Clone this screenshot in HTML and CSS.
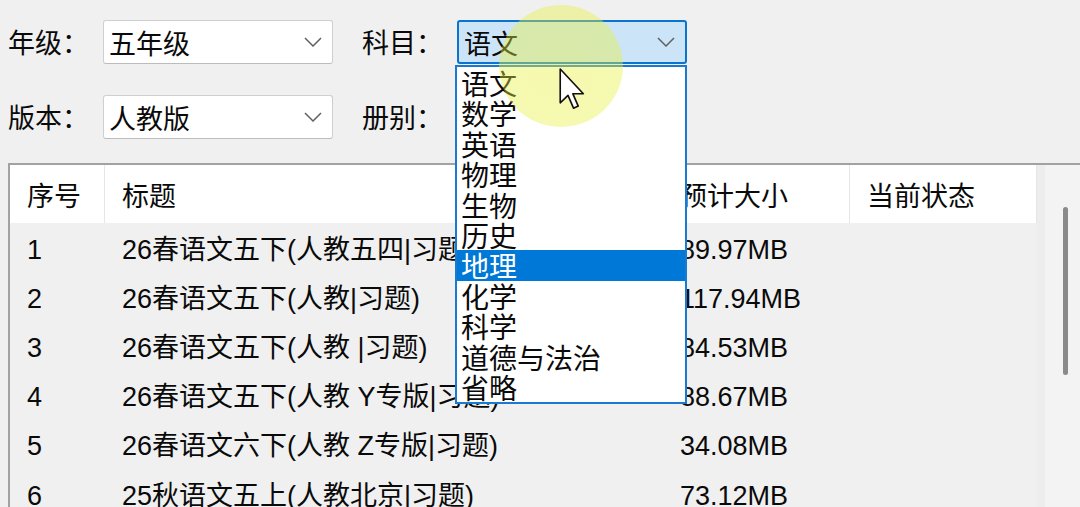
FILE: index.html
```html
<!DOCTYPE html>
<html lang="zh-CN">
<head>
    <meta charset="UTF-8">
    <title>下载器</title>
    <link rel="stylesheet" href="styles.css">
</head>
<body>
    <div class="form">
        <div class="field-label">年级：</div>
        <div class="combo">
            <span>五年级</span>
            <svg class="chevron" viewBox="0 0 18 10"><path d="M1 1 L9 9 L17 1"/></svg>
        </div>
        <div class="field-label second">科目：</div>
        <div class="combo focus">
            <span>语文</span>
            <svg class="chevron" viewBox="0 0 18 10"><path d="M1 1 L9 9 L17 1"/></svg>
        </div>
        <div class="field-label">版本：</div>
        <div class="combo">
            <span>人教版</span>
            <svg class="chevron" viewBox="0 0 18 10"><path d="M1 1 L9 9 L17 1"/></svg>
        </div>
        <div class="field-label second">册别：</div>
        <div class="combo">
            <span></span>
            <svg class="chevron" viewBox="0 0 18 10"><path d="M1 1 L9 9 L17 1"/></svg>
        </div>
    </div>

    <div class="list">
        <div class="list-table">
            <div class="head">序号</div>
            <div class="head">标题</div>
            <div class="head">预计大小</div>
            <div class="head">当前状态</div>

            <div class="cell">1</div><div class="cell">26春语文五下(人教五四|习题)</div><div class="cell">89.97MB</div><div class="cell"></div>
            <div class="cell">2</div><div class="cell">26春语文五下(人教|习题)</div><div class="cell">117.94MB</div><div class="cell"></div>
            <div class="cell">3</div><div class="cell">26春语文五下(人教 |习题)</div><div class="cell">84.53MB</div><div class="cell"></div>
            <div class="cell">4</div><div class="cell">26春语文五下(人教 Y专版|习题)</div><div class="cell">88.67MB</div><div class="cell"></div>
            <div class="cell">5</div><div class="cell">26春语文六下(人教 Z专版|习题)</div><div class="cell">34.08MB</div><div class="cell"></div>
            <div class="cell">6</div><div class="cell">25秋语文五上(人教北京|习题)</div><div class="cell">73.12MB</div><div class="cell"></div>
        </div>
        <div class="scrollbar"><div class="thumb"></div></div>
    </div>

    <ul class="dropdown">
        <li>语文</li>
        <li>数学</li>
        <li>英语</li>
        <li>物理</li>
        <li>生物</li>
        <li>历史</li>
        <li class="selected">地理</li>
        <li>化学</li>
        <li>科学</li>
        <li>道德与法治</li>
        <li>省略</li>
    </ul>

    <!-- screen recorder click highlight -->
    <div class="spotlight"></div>
    <svg class="cursor" viewBox="0 0 13 21">
        <path d="M0.5 0.5 L0.5 17 L4.3 13.4 L7 19.6 L9.3 18.6 L6.7 12.6 L11.8 12.6 Z"/>
    </svg>
</body>
</html>
```

FILE: styles.css
```css
* {
    margin: 0;
    padding: 0;
    box-sizing: border-box;
}

body {
    font-family: "Liberation Sans", "Noto Sans CJK SC", sans-serif;
    background: #f0f0f0;
    color: #0a0a0a;
    width: 1080px;
    height: 507px;
    overflow: hidden;
    position: relative;
}

.form {
    display: grid;
    grid-template-columns: 95px 230px 124px 230px;
    row-gap: 31px;
    padding: 20px 0 0 8px;
    font-size: 27px;
    line-height: 30px;
}

.field-label {
    display: flex;
    align-items: center;
    height: 44px;
    padding-top: 4px;
}

.field-label.second {
    padding-left: 29px;
}

.combo {
    height: 44px;
    background: #fff;
    border: 1px solid #cfcfcf;
    border-bottom-color: #bcbcbc;
    border-radius: 3px;
    display: flex;
    align-items: center;
    justify-content: space-between;
    padding: 0 10px 0 5px;
}

.combo span {
    padding-top: 5px;
}

.combo.focus {
    background: #cce4f7;
    border: 2px solid #0a74cf;
    padding-left: 5px;
}

.chevron {
    width: 18px;
    height: 10px;
    fill: none;
    stroke: #606060;
    stroke-width: 1.5;
}

.list {
    margin: 24px 0 0 8px;
    border-top: 2px solid #a2a2a2;
    border-left: 2px solid #a2a2a2;
    display: flex;
    height: 344px;
}

.list-table {
    display: grid;
    grid-template-columns: 95px 558px 187px 187px;
    grid-template-rows: 58px;
    grid-auto-rows: 49.2px;
    font-size: 27px;
    line-height: 30px;
    align-content: start;
    background: #f0f0f0;
}

.head {
    background: #fff;
    border-right: 1px solid #e6e6e6;
    padding: 5px 0 0 17px;
    display: flex;
    align-items: center;
}

.cell {
    padding: 4px 0 0 17px;
    display: flex;
    align-items: center;
    white-space: nowrap;
    overflow: hidden;
}

.scrollbar {
    flex: 1;
    background: #f3f3f3;
    border-left: 8px solid #ededed;
    padding: 42px 0 0 18px;
}

.thumb {
    width: 5px;
    height: 168px;
    background: #8a8a8a;
    border-radius: 3px;
}

.dropdown {
    position: absolute;
    left: 455px;
    top: 65px;
    width: 232px;
    height: 339px;
    list-style: none;
    background: #fff;
    border: 2px solid #1a7ad0;
    padding-top: 1px;
    font-size: 28px;
    font-family: "Noto Sans CJK SC", sans-serif;
}

.dropdown li {
    height: 30.4px;
    line-height: 30.4px;
    padding-left: 4px;
}

.dropdown li.selected {
    background: #0078d7;
    color: #fff;
}

.spotlight {
    position: absolute;
    left: 499px;
    top: 5px;
    width: 124px;
    height: 122px;
    border-radius: 50%;
    background: radial-gradient(circle, rgba(232, 240, 60, 0.42) 0%, rgba(232, 240, 60, 0.4) 80%, rgba(232, 240, 60, 0) 100%);
}

.cursor {
    position: absolute;
    left: 559px;
    top: 68px;
    width: 27px;
    height: 43px;
    fill: #fff;
    stroke: #111;
    stroke-width: 0.8;
    stroke-linejoin: round;
}
```
